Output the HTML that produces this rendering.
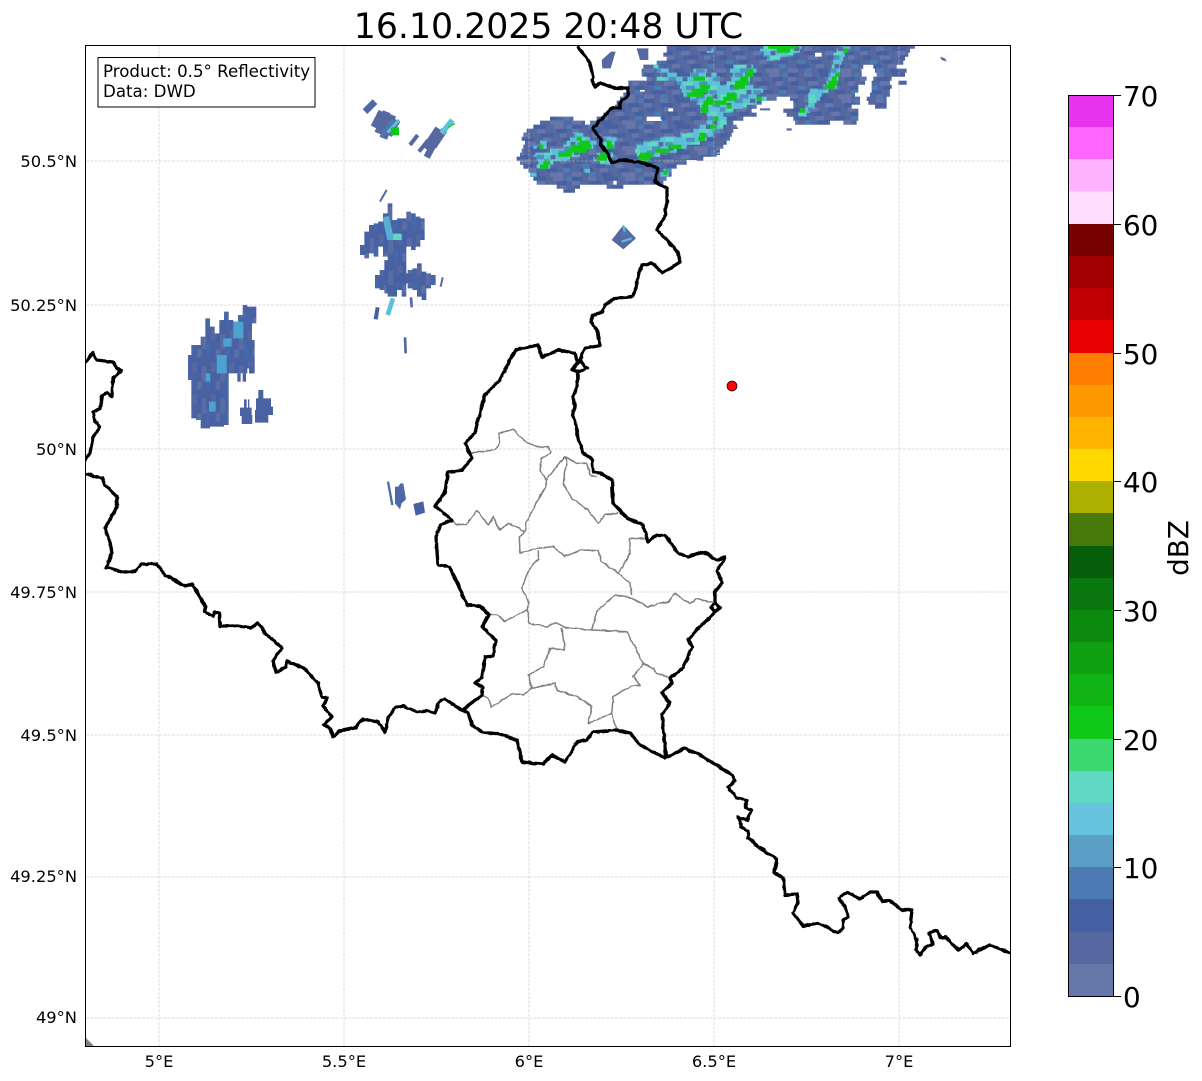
<!DOCTYPE html>
<html><head><meta charset="utf-8"><style>
html,body{margin:0;padding:0;background:#fff;width:1202px;height:1081px;overflow:hidden}
svg{display:block}
text{font-family:"DejaVu Sans",sans-serif;fill:#000}
</style></head><body>
<svg width="1202" height="1081" viewBox="0 0 1202 1081" xmlns="http://www.w3.org/2000/svg">
<defs>
<clipPath id="f"><rect x="85" y="45" width="925" height="1001"/></clipPath>
<filter id="w" x="0" y="0" width="1202" height="1081" filterUnits="userSpaceOnUse"><feTurbulence type="fractalNoise" baseFrequency="0.16" numOctaves="2" seed="4"/><feDisplacementMap in="SourceGraphic" scale="2.6" xChannelSelector="R" yChannelSelector="G"/></filter>
<pattern id="p1" width="216" height="78" patternUnits="userSpaceOnUse" y="20">
<rect width="216" height="78" fill="#5568a0"/>
<g fill="#4660a2"><rect x="0" y="0" width="30" height="13"/><rect x="96" y="0" width="42" height="13"/><rect x="50" y="13" width="36" height="13"/><rect x="170" y="13" width="30" height="13"/><rect x="10" y="26" width="24" height="13"/><rect x="120" y="26" width="40" height="13"/><rect x="70" y="39" width="30" height="13"/><rect x="190" y="39" width="26" height="13"/><rect x="24" y="52" width="40" height="13"/><rect x="140" y="52" width="30" height="13"/><rect x="90" y="65" width="30" height="13"/></g>
<g fill="#6676aa"><rect x="48" y="0" width="24" height="13"/><rect x="160" y="0" width="30" height="13"/><rect x="0" y="13" width="22" height="13"/><rect x="110" y="13" width="26" height="13"/><rect x="60" y="26" width="30" height="13"/><rect x="180" y="26" width="20" height="13"/><rect x="130" y="39" width="24" height="13"/><rect x="84" y="52" width="24" height="13"/><rect x="0" y="65" width="30" height="13"/><rect x="150" y="65" width="40" height="13"/></g>
<g fill="#4c7cb4"><rect x="200" y="0" width="16" height="13"/><rect x="30" y="39" width="22" height="13"/><rect x="190" y="52" width="20" height="13"/><rect x="50" y="65" width="20" height="13"/></g>
</pattern>
<pattern id="p3" width="132" height="78" patternUnits="userSpaceOnUse" y="20">
<rect width="132" height="78" fill="#5cc0d8"/>
<g fill="#60d8c4"><rect x="0" y="0" width="24" height="13"/><rect x="70" y="13" width="30" height="13"/><rect x="20" y="26" width="30" height="13"/><rect x="100" y="39" width="24" height="13"/><rect x="46" y="52" width="30" height="13"/><rect x="0" y="65" width="22" height="13"/></g>
<g fill="#4f90c0"><rect x="44" y="0" width="24" height="13"/><rect x="110" y="13" width="22" height="13"/><rect x="0" y="26" width="16" height="13"/><rect x="70" y="26" width="24" height="13"/><rect x="30" y="39" width="26" height="13"/><rect x="100" y="52" width="22" height="13"/><rect x="60" y="65" width="26" height="13"/></g>
<g fill="#5568a0"><rect x="90" y="0" width="16" height="13"/><rect x="20" y="13" width="14" height="13"/><rect x="80" y="52" width="14" height="13"/><rect x="110" y="65" width="14" height="13"/></g>
</pattern>
<pattern id="p2" width="56" height="96" patternUnits="userSpaceOnUse">
<rect width="56" height="96" fill="#4a62a2"/>
<rect x="0" y="0" width="14" height="40" fill="#4660a8"/><rect x="14" y="20" width="14" height="44" fill="#5a6ca4"/>
<rect x="28" y="50" width="14" height="40" fill="#4468ac"/><rect x="42" y="6" width="14" height="30" fill="#5568a0"/><rect x="0" y="64" width="14" height="24" fill="#5870a8"/>
</pattern>
</defs>
<rect width="1202" height="1081" fill="#fff"/>
<g clip-path="url(#f)">
<!-- main cloud -->
<g transform="translate(500 40) scale(.33333)">
<path fill="none" stroke="url(#p1)" stroke-width="12.600" d="M500,20H1245M500,32H1230M490,44H945M965,44H1225M500,56H1215M470,68H1210M430,80H1090M1120,80H1190M425,92H1085M1125,92H1220M425,104H1085M1130,104H1215M440,116H1100M1120,116H1175M1195,128H1220M385,128H1095M1115,128H1170M385,140H1075M1115,140H1175M380,152H1075M1115,152H1170M370,164H1065M1110,164H1170M360,176H830M870,176H1080M1100,176H1160M350,188H785M880,188H1080M1105,188H1160M345,200H770M880,200H1055M1125,200H1160M330,212H755M850,212H1075M310,224H770M860,224H1075M150,236H220M290,236H730M880,236H1075M120,248H255M270,248H700M885,248H990M1030,248H1070M100,260H710M80,272H700M70,284H695M65,296H690M75,308H680M70,320H670M65,332H660M60,344H650M50,356H610M60,368H560M70,380H530M85,392H510M90,404H510M100,416H500M110,428H340M350,428H480M170,440H240M320,440H370M440,428H490M190,452H225"/>
<path fill="#fff" d="M440,230h42v13h-42zM505,205h14v9h-14zM420,150h14v5h-14zM465,238h20v5h-20zM700,268h14v4h-14zM560,360h30v4h-30z"/>
<path fill="#5568a0" d="M410,25h35v35h-25zM305,60l28,-25l14,0l-15,50h-25zM1320,50l15,5l5,10l-15,-5zM860,265h15v7h-15zM780,205h30v6h-30zM640,340h20v5h-20zM700,262h14v5h-14z"/>
<path fill="none" stroke="url(#p3)" stroke-width="12.600" d="M790,20H905M1020,20H1050M780,32H900M1010,32H1040M620,32H640M790,44H880M1000,44H1035M800,56H840M1000,56H1030M1000,68H1025M460,80H490M700,80H760M995,80H1020M470,92H510M580,92H620M690,92H770M990,92H1020M490,104H530M570,104H650M700,104H760M985,104H1015M470,116H660M690,116H750M985,116H1015M530,128H660M680,128H750M980,128H1010M540,140H690M700,140H760M970,140H1010M545,152H790M930,152H985M550,164H780M925,164H965M570,176H800M925,176H960M590,188H770M925,188H950M600,200H740M915,200H945M600,212H700M900,212H930M620,224H670M895,224H920M625,236H680M620,248H680M600,260H670M580,272H660M540,284H640M220,284H250M480,296H620M210,296H270M310,296H350M430,308H600M200,308H290M310,308H345M120,308H140M410,320H560M190,320H280M100,320H140M310,320H345M405,332H530M150,332H250M410,344H480M100,344H240M290,344H340M420,356H450M110,356H210M280,356H330M115,368H160M300,368H330M110,380H150M480,392H515M250,392H270M480,404H515M90,404H110"/>
<path fill="none" stroke="#10c818" stroke-width="12.600" d="M805,20H890M830,32H870M745,92H760M735,104H760M580,116H615M720,116H745M705,128H745M600,140H630M700,140H735M575,152H625M560,164H610M680,164H710M620,176H640M670,176H710M770,176H785M610,188H680M605,200H625M680,200H695M605,212H625M640,236H655M630,260H650M600,284H615M595,296H615M230,296H245M240,308H270M320,308H335M510,320H545M120,320H130M215,320H275M320,320H340M465,332H510M200,332H260M420,344H460M175,344H215M300,344H325M415,356H450M290,356H320M130,368H150M120,380H145M1030,32H1045M1005,104H1020M995,116H1010M985,128H1015M975,140H1005M900,212H915M490,398H502"/>
</g>
<!-- small clouds -->
<g transform="translate(85 40) scale(.33333)">
<path fill="none" stroke="#4f68a4" stroke-width="20" d="M840,215L870,185"/>
<path fill="none" stroke="#5568a0" stroke-width="24" d="M868,262L892,215M880,280L905,215M895,295L922,225M910,285L935,240"/>
<path fill="none" stroke="#4f78b0" stroke-width="10" d="M888,290L925,240"/>
<path fill="none" stroke="#5bbdd6" stroke-width="10" d="M908,278L942,240"/>
<rect x="918" y="262" width="24" height="24" fill="#10c818"/>
<path fill="none" stroke="#5568a0" stroke-width="20" d="M1025,352L1050,305M1020,325L1060,265M1045,320L1078,270"/>
<path fill="none" stroke="#5568a0" stroke-width="12" d="M975,315L998,285M1002,335L1030,300"/>
<path fill="none" stroke="#5bc4d6" stroke-width="16" d="M1070,280L1102,240"/>
<path fill="none" stroke="#10c818" stroke-width="4" d="M1090,262L1110,250"/>
<path fill="none" stroke="url(#p2)" stroke-width="14" d="M832,615V645M845,575V655M859,555V640M873,550V650M887,545V620M901,520V650M915,490V770M929,540V770M943,535V750M957,535V770M971,515V620M985,520V630M999,530V620M1012,535V600M877,705V745M891,690V750M905,660V760M975,690V745M989,685V750M1003,670V770M1017,695V780M1031,700V745M1045,705V735"/>
<path fill="#4660a2" d="M880,545h35v26h-35zM930,700h50v30h-50zM905,735h30v25h-30z"/>
<path fill="none" stroke="#5568a0" stroke-width="6" d="M885,485L905,450M1067,740L1073,712"/>
<path fill="none" stroke="#5bc0d8" stroke-width="14" d="M908,825L924,775"/>
<path fill="none" stroke="#4660a2" stroke-width="12" d="M872,838L878,802"/>
<path fill="none" stroke="#5568a0" stroke-width="8" d="M980,802L978,772M960,892L962,940"/>
<path fill="none" stroke="#55b0d0" stroke-width="20" d="M902,530L915,590L945,590"/>
<rect x="925" y="582" width="25" height="18" fill="#60d8c4"/>
<path fill="none" stroke="url(#p2)" stroke-width="14" d="M316,945V1020M326,915V1135M340,915V1140M354,890V1165M368,835V1165M382,860V1160M396,880V1160M410,840V1160M424,815V1155M438,840V1000M452,845V1000M466,825V1000M480,795V1000M494,800V985M507,800V850M502,900V1000"/>
<path fill="#4ea2d0" d="M395,945h30v55h-30zM445,845h30v50h-30zM415,895h25v25h-25zM362,1000h14v25h-14zM372,1085h20v30h-20z"/>
<path fill="#4a62a2" d="M457,1000h10v25h-10zM473,1000h10v25h-10zM492,980h12v20h-12zM465,1103h35v25h-35zM477,1078h8v30h-8zM489,1078h4v30h-4zM470,1125h32v27h-32zM513,1075h45v40h-45zM520,1050h15v30h-15zM510,1110h40v38h-40zM550,1100h14v25h-14z"/>
</g>
<g transform="translate(85 340) scale(.33333)">
<path fill="none" stroke="#4f68a8" stroke-width="7" d="M909,425L922,495"/>
<path fill="#4f68a8" d="M930,440L940,440L946,430L955,430L963,478L950,490L945,508L930,490Z"/>
<path fill="#4660a2" d="M985,492L1015,484L1020,518L992,527Z"/>
</g>
<g transform="translate(560 40) scale(.33333)">
<path fill="#5568a0" d="M155,600L190,555L228,595L190,628Z"/>
<path fill="none" stroke="#5bbdd6" stroke-width="7" d="M190,558L195,580M185,605L215,595"/>
<rect x="185" y="575" width="20" height="12" fill="#4a78b0"/>
</g>
</g>
<!-- grid -->
<g stroke="#bcbcbc" stroke-width=".5" stroke-dasharray="3 1.3" fill="none">
<path d="M159 46V1046M344 46V1046M529 46V1046M714 46V1046M899 46V1046"/>
<path d="M86 161H1010M86 305H1010M86 449H1010M86 592H1010M86 735H1010M86 877H1010M86 1018H1010"/>
</g>
<g clip-path="url(#f)">
<!-- cantons -->
<g filter="url(#w)">
<g transform="translate(430 420) scale(.33333)" fill="none" stroke="#808080" stroke-width="4.500" stroke-linejoin="round">
<path d="M115,100L150,95L195,90L210,65L205,40L250,28L285,65L320,80L355,80L362,98L335,115L330,150L348,180L375,145L405,112L410,125L400,190L425,235L475,270L505,310L525,285L565,278"/>
<path d="M348,180L345,205L315,255L290,305L285,335L268,350L270,400L320,385L370,380L405,410L450,390L505,392L515,425L565,460L600,490L605,525"/>
<path d="M285,335L235,310L210,330L190,290L175,315L140,272L110,312L80,315L60,295"/>
<path d="M405,112L440,130L470,130L480,165L500,170"/>
<path d="M565,460L600,400L600,355L650,355"/>
<path d="M325,390L325,420L310,430L290,465L275,505L295,545L292,570L298,610L350,620L375,608L405,622L440,625L485,630L500,575L555,525L595,530L655,560L715,545L735,520L780,552L800,535L855,550"/>
<path d="M292,570L225,603L200,585L178,585"/>
<path d="M485,630L590,635L640,730L610,770L630,795L600,800L550,830L545,880L475,910L485,860L440,830L380,810L375,790L305,805L295,765L340,740L360,685L405,690L395,625"/>
<path d="M305,805L280,825L250,820L185,860L175,835L155,825"/>
<path d="M640,730L670,745L680,760L715,770"/>
<path d="M545,880L560,925"/>
</g>
<!-- borders -->
<g fill="none" stroke="#000" stroke-width="3.300" stroke-linejoin="round" stroke-linecap="round">
<path d="M85,363L93,353L97,360L113,362L117,368L121,371L113,378L112,397L107,393L102,395L100,408L93,412L95,422L100,427L93,437L90,453L85,460"/>
<path d="M85,474L102,478L105,485L117,497L117,507L105,528L110,542L112,553L106,568L110,568L115,570L125,572L135,571L142,564L157,564L165,575L185,586L192,584L206,607L205,612L213,616L215,612L219,613L220,626L237,626L250,628L258,623L265,633L282,648L273,661L276,672L286,667L287,661L305,669L318,683L322,697L327,698L323,706L332,717L324,725L330,728L333,737L339,731L355,728L363,719L378,722L385,732L388,718L395,708L403,706L418,712L428,711L435,713L439,702L444,699L460,709L468,713L472,725L483,733L497,733L517,740L522,762L543,764L552,755L565,762L577,742L587,740L592,732L617,730L630,733L640,745L663,757L665,758L685,748L700,755L713,763L732,775L735,781L728,787L737,798L747,800L745,808L752,810L747,820L738,817L742,827L748,831L748,838L760,848L777,859L774,873L783,877L785,895L797,894L798,903L793,913L803,926L818,923L838,933L843,928L843,920L848,917L845,907L839,898L847,892L860,899L870,892L877,892L883,902L889,900L902,910L912,910L910,927L917,940L916,950L920,955L925,948L933,944L929,933L937,930L940,937L947,938L958,950L967,944L973,953L990,945L1003,950L1010,953"/>
<path d="M578,47L590,63L593,77L592,80L595,87L600,83L615,88L628,88L628,95L620,103L620,108L612,108L593,128L597,135L602,140L600,145L607,152L612,163L620,160L640,162L658,168L655,182L667,188L667,203L665,210L666,215L657,230L678,252L680,262L663,273L652,263L642,265L638,277L636,288L632,297L615,298L605,305L603,312L593,315L591,322L598,332L600,345L585,348L582,355L580,360L572,370L580,372L587,368L580,360M578,373L577,387L573,397L575,407L572,415L575,420L578,438L583,452L592,460L593,472L600,473L612,480L613,503L627,518L643,525L648,542L657,535L665,535L678,553L688,557L703,552L717,560L725,557L722,564L717,570L722,583L715,592L715,603L720,608L715,612L711,607L715,603M715,612L697,630L688,640L692,647L683,668L670,678L672,683L662,693L670,703L662,715L666,757"/>
<path d="M577,362L575,353L558,350L542,357L538,345L515,350L500,380L485,395L478,420L475,433L465,443L472,458L462,470L448,472L445,492L435,506L452,520L440,525L436,537L438,565L450,567L467,605L480,606L489,615L482,627L496,640L493,656L485,657L482,677L475,683L483,687L482,695L462,710"/>
</g>
</g>
<path d="M85,1037L94,1046H85Z" fill="#808080"/>
<circle cx="732" cy="386" r="5" fill="#f00" stroke="#000" stroke-width=".7"/>
</g>
<rect x="85.5" y="45.5" width="925" height="1001" fill="none" stroke="#000" stroke-width="1"/>
<rect x="98" y="57.5" width="217" height="49.5" fill="#fff" stroke="#000" stroke-width="1"/>
<text x="103" y="77" font-size="16.65">Product: 0.5° Reflectivity</text>
<text x="103" y="97" font-size="16.65">Data: DWD</text>
<text x="548.5" y="38" font-size="34.7" text-anchor="middle">16.10.2025 20:48 UTC</text>
<g font-size="16.3" text-anchor="end">
<text x="77" y="167">50.5°N</text><text x="77" y="311">50.25°N</text><text x="77" y="455">50°N</text>
<text x="77" y="598">49.75°N</text><text x="77" y="741">49.5°N</text><text x="77" y="882">49.25°N</text><text x="77" y="1023">49°N</text>
</g>
<g font-size="16.3" text-anchor="middle">
<text x="159" y="1067">5°E</text><text x="344" y="1067">5.5°E</text><text x="529" y="1067">6°E</text><text x="714" y="1067">6.5°E</text><text x="899" y="1067">7°E</text>
</g>
<!-- colorbar -->
<g>
<rect x="1068" y="95" width="46" height="33" fill="#ea33ee"/><rect x="1068" y="127" width="46" height="33" fill="#ff66ff"/>
<rect x="1068" y="159" width="46" height="33" fill="#ffb3ff"/><rect x="1068" y="191.500" width="46" height="33" fill="#ffddff"/>
<rect x="1068" y="224" width="46" height="33" fill="#780000"/><rect x="1068" y="256" width="46" height="33" fill="#a00000"/>
<rect x="1068" y="288" width="46" height="33" fill="#c00000"/><rect x="1068" y="320" width="46" height="33" fill="#e60000"/>
<rect x="1068" y="353" width="46" height="33" fill="#ff7d00"/><rect x="1068" y="385" width="46" height="33" fill="#ff9900"/>
<rect x="1068" y="417" width="46" height="33" fill="#ffb400"/><rect x="1068" y="449" width="46" height="33" fill="#ffd800"/>
<rect x="1068" y="481" width="46" height="33" fill="#aeb000"/><rect x="1068" y="513" width="46" height="33" fill="#477a0a"/>
<rect x="1068" y="546" width="46" height="33" fill="#075e0a"/><rect x="1068" y="578" width="46" height="33" fill="#0a780e"/>
<rect x="1068" y="610" width="46" height="33" fill="#0b8a0e"/><rect x="1068" y="642" width="46" height="33" fill="#0ea010"/>
<rect x="1068" y="674" width="46" height="33" fill="#10b414"/><rect x="1068" y="706" width="46" height="33" fill="#10c818"/>
<rect x="1068" y="739" width="46" height="33" fill="#3cd870"/><rect x="1068" y="771" width="46" height="33" fill="#60d8c4"/>
<rect x="1068" y="803" width="46" height="33" fill="#66c4de"/><rect x="1068" y="835" width="46" height="33" fill="#5c9fc6"/>
<rect x="1068" y="867" width="46" height="33" fill="#4c7ab2"/><rect x="1068" y="899" width="46" height="33" fill="#4460a2"/>
<rect x="1068" y="932" width="46" height="33" fill="#5568a0"/><rect x="1068" y="964" width="46" height="32" fill="#6478aa"/>
</g>
<rect x="1068.500" y="95.500" width="45" height="901" fill="none" stroke="#000" stroke-width="1"/>
<path d="M1114 95.500h7M1114 224.500h7M1114 353.500h7M1114 481.500h7M1114 610.500h7M1114 739.500h7M1114 867.500h7M1114 996.500h7" stroke="#000" stroke-width="1"/>
<g font-size="27.800">
<text x="1123" y="106">70</text><text x="1123" y="235">60</text><text x="1123" y="364">50</text><text x="1123" y="492">40</text>
<text x="1123" y="621">30</text><text x="1123" y="750">20</text><text x="1123" y="878">10</text><text x="1123" y="1007">0</text>
</g>
<text transform="translate(1188 548) rotate(-90)" font-size="27.800" text-anchor="middle">dBZ</text>
</svg>
</body></html>
